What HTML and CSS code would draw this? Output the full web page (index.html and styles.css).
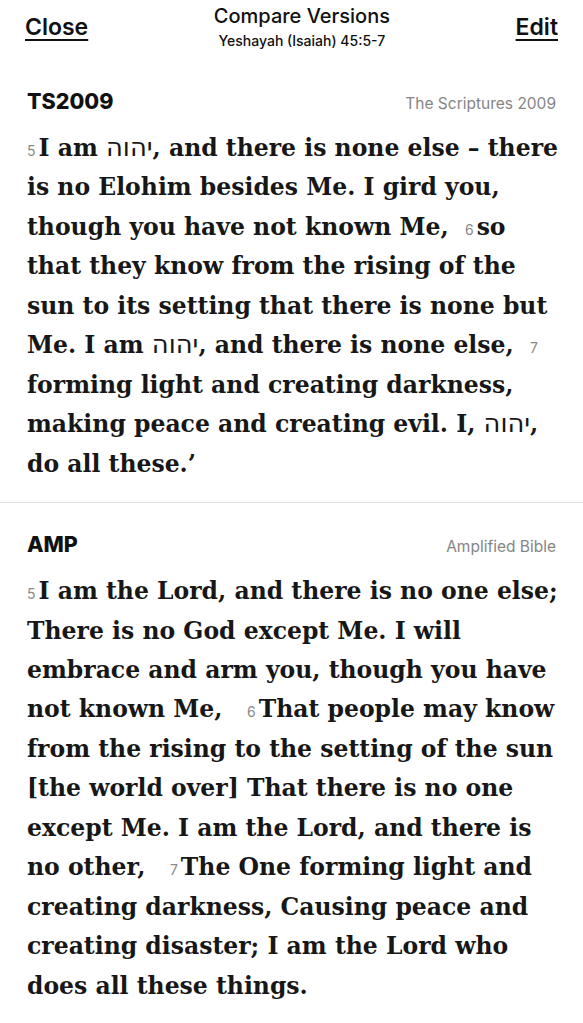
FILE: index.html
```html
<!DOCTYPE html>
<html lang="en">
<head>
    <meta charset="UTF-8">
    <meta name="viewport" content="width=device-width, initial-scale=1.0">
    <title>Compare Versions</title>
    <link rel="stylesheet" href="styles.css">
</head>
<body>

    <header class="top-bar">
        <a href="#" class="bar-link">Close</a>
        <div class="title">
            <div class="title-main">Compare Versions</div>
            <div class="title-sub">Yeshayah (Isaiah) 45:5-7</div>
        </div>
        <a href="#" class="bar-link">Edit</a>
    </header>

    <!-- TS2009 -->
    <section class="version">
        <div class="version-head">
            <span class="abbr">TS2009</span>
            <span class="full-name">The Scriptures 2009</span>
        </div>
        <p class="verse-text"><span class="vnum">5</span>I am <span class="heb">יהוה</span>, and there is none else – there is no Elohim besides Me. I gird you, though you have not known Me, &nbsp;<span class="vnum">6</span>so that they know from the rising of the sun to its setting that there is none but Me. I am <span class="heb">יהוה</span>, and there is none else, &nbsp;<span class="vnum">7</span> forming light and creating darkness, making peace and creating evil. I, <span class="heb">יהוה</span>, do all these.’</p>
    </section>

    <!-- AMP -->
    <section class="version">
        <div class="version-head">
            <span class="abbr">AMP</span>
            <span class="full-name">Amplified Bible</span>
        </div>
        <p class="verse-text"><span class="vnum">5</span>I am the Lord, and there is no one else; There is no God except Me. I will embrace and arm you, though you have not known Me, &nbsp;&nbsp;<span class="vnum">6</span>That people may know from the rising to the setting of the sun [the world over] That there is no one except Me. I am the Lord, and there is no other, &nbsp;&nbsp;<span class="vnum">7</span>The One forming light and creating darkness, Causing peace and creating disaster; I am the Lord who does all these things.</p>
    </section>

</body>
</html>
```

FILE: styles.css
```css
body {
    margin: 0;
    background: #ffffff;
    color: #111111;
    font-family: Inter, "Noto Sans", sans-serif;
}
.top-bar {
    display: flex;
    justify-content: space-between;
    align-items: center;
    padding: 0 25px 6px 25px;
    height: 54px;
}
.bar-link {
    color: #111111;
    font-size: 23px;
    font-weight: 600;
    text-decoration: underline;
    text-underline-offset: 4px;
    text-decoration-thickness: 2px;
}
.title {
    text-align: center;
}
.title-main {
    font-size: 20px;
    font-weight: 500;
    line-height: 24px;
}
.title-sub {
    font-size: 14px;
    font-weight: 500;
    line-height: 18px;
    margin-top: 4px;
}
.version {
    padding: 28px 27px 18px 27px;
    border-bottom: 1px solid #e2e2e2;
}
.version-head {
    display: flex;
    justify-content: space-between;
    align-items: baseline;
}
.abbr {
    font-size: 21.5px;
    font-weight: 800;
}
.full-name {
    font-size: 15.5px;
    color: #858585;
}
.verse-text {
    margin: 15px -7px 0 0;
    font-family: "DejaVu Serif", serif;
    font-weight: bold;
    font-size: 23.5px;
    line-height: 39.45px;
    color: #171717;
}
.vnum {
    font-family: Inter, sans-serif;
    font-weight: 400;
    font-size: 14px;
    line-height: 1;
    color: #8a8a8a;
    margin-right: 3px;
}
.heb {
    font-family: "DejaVu Sans", sans-serif;
    font-weight: 400;
    font-size: 1.1em;
    line-height: 1;
}
```
